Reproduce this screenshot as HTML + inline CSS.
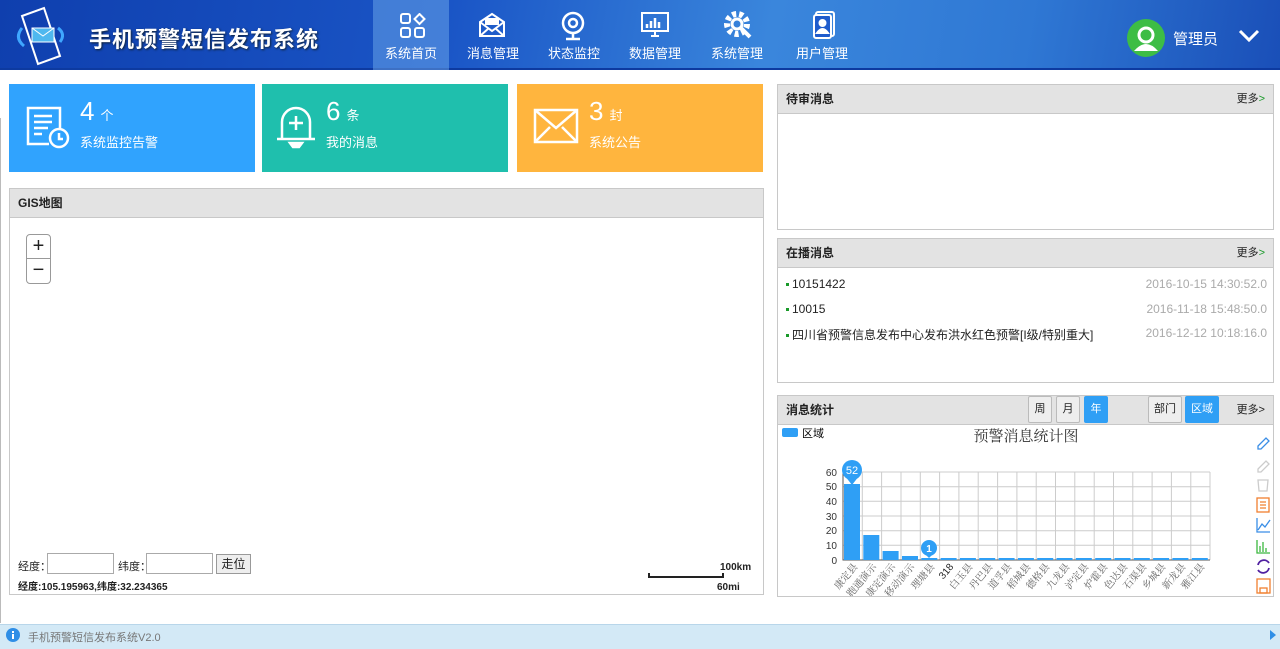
<!DOCTYPE html>
<html><head><meta charset="utf-8">
<style>
*{margin:0;padding:0;box-sizing:border-box}
body{width:1280px;height:649px;overflow:hidden;background:#fff;font-family:"Liberation Sans","Noto Sans CJK SC",sans-serif;position:relative;font-size:12px;color:#222}
.a{position:absolute}
#hdr{left:0;top:0;width:1280px;height:70px;background:linear-gradient(100deg,#0f3fae 0%,#1a55c6 35%,#3a86dc 60%,#2f78d4 80%,#1a4fb8 100%);border-bottom:2px solid #0d3aa0}
.nav{top:0;height:70px;width:80px;color:#fff;font-size:13px;text-align:center}
.nav .t{position:absolute;bottom:8px;width:100%;left:0}
.card{top:84px;height:88px;color:#fff}
.card .n{position:absolute;left:71px;top:12px;font-size:26px}
.card .n small{font-size:13px;margin-left:6px}
.card .l{position:absolute;left:71px;top:48px;font-size:13px}
.pan{border:1px solid #c8c8c8;background:#fff}
.ph{height:29px;background:#e3e3e3;border-bottom:1px solid #c8c8c8;font-weight:bold;font-size:12px;line-height:28px;padding:0 0 0 8px;position:relative}
.more{position:absolute;right:8px;top:0;font-weight:normal;font-size:11px}
.more b{color:#1a9a2a;font-weight:normal}
.row{position:absolute;left:8px;font-size:12px}
.row i{display:inline-block;width:3px;height:3px;background:#1a9a2a;margin-right:3px;vertical-align:middle}
.dt{position:absolute;right:6px;color:#aaa;font-size:12px}
.btn{top:396px;height:27px;border:1px solid #bbb;background:#eee;font-size:11px;text-align:center;line-height:25px;border-radius:2px}
.on{background:#2f9ff5;color:#fff;border-color:#2f9ff5}
</style></head><body>
<div id="hdr" class="a">
 <svg class="a" style="left:14px;top:6px" width="62" height="60" viewBox="0 0 62 60"><path d="M8 10 L30 2 L46 50 L24 58 Z" fill="none" stroke="#fff" stroke-width="2"/><rect x="18" y="22" width="22" height="14" fill="#4fb8ef" stroke="#fff"/><path d="M18 22l11 8 11-8" stroke="#fff" fill="none"/><path d="M8 22 Q0 32 10 40" stroke="#3fa7ff" stroke-width="3" fill="none"/><path d="M44 22 Q52 28 46 36" stroke="#3fa7ff" stroke-width="3" fill="none"/></svg>
 <div class="a" style="left:89px;top:22px;color:#fff;font-size:22px;font-weight:bold;letter-spacing:1px;text-shadow:1px 1px 2px #123">手机预警短信发布系统</div>
 <div class="a nav" style="left:373px;width:76px;background:rgba(120,180,240,.45)"><svg class="a" style="left:27px;top:13px" width="26" height="26" viewBox="0 0 26 26" fill="none" stroke="#fff" stroke-width="2"><rect x="1" y="1" width="9" height="9" rx="2"/><rect x="1" y="15" width="9" height="9" rx="2"/><rect x="15" y="15" width="9" height="9" rx="2"/><path d="M19.5 1l5 5-5 5-5-5z"/></svg><div class="t">系统首页</div></div>
 <div class="a nav" style="left:453px"><svg class="a" style="left:25px;top:12px" width="28" height="26" viewBox="0 0 28 26" fill="none" stroke="#fff" stroke-width="2"><path d="M2 10L14 2l12 8v14H2z"/><path d="M2 10l12 9 12-9M2 24l9-8M26 24l-9-8"/><rect x="8" y="7" width="12" height="5" fill="#fff"/></svg><div class="t">消息管理</div></div>
 <div class="a nav" style="left:534px"><svg class="a" style="left:27px;top:11px" width="24" height="30" viewBox="0 0 24 30" fill="none" stroke="#fff" stroke-width="2.5"><circle cx="12" cy="12" r="10"/><circle cx="12" cy="12" r="4"/><path d="M5 28h14M12 22v6"/></svg><div class="t">状态监控</div></div>
 <div class="a nav" style="left:615px"><svg class="a" style="left:26px;top:12px" width="28" height="26" viewBox="0 0 28 26"><rect x="1" y="1" width="26" height="18" fill="none" stroke="#fff" stroke-width="2"/><path d="M6 16v-4M10 16v-7M14 16v-10M18 16v-6" stroke="#fff" stroke-width="2.5"/><path d="M10 24h8M14 19v5" stroke="#fff" stroke-width="2"/></svg><div class="t">数据管理</div></div>
 <div class="a nav" style="left:697px"><svg class="a" style="left:27px;top:11px" width="28" height="28" viewBox="0 0 28 28"><circle cx="13" cy="13" r="10" fill="none" stroke="#fff" stroke-width="6" stroke-dasharray="4 3"/><circle cx="13" cy="13" r="5" fill="none" stroke="#fff" stroke-width="3"/><path d="M16 16l10 10" stroke="#fff" stroke-width="4"/></svg><div class="t">系统管理</div></div>
 <div class="a nav" style="left:782px"><svg class="a" style="left:31px;top:11px" width="22" height="28" viewBox="0 0 22 28" fill="none" stroke="#fff" stroke-width="2"><rect x="3" y="1" width="18" height="24" rx="2"/><rect x="1" y="4" width="17" height="23" rx="2" fill="#1f5ccc"/><circle cx="9.5" cy="12" r="3" fill="#fff"/><path d="M4 22q5.5-8 11 0z" fill="#fff"/></svg><div class="t">用户管理</div></div>
 <svg class="a" style="left:1127px;top:19px" width="38" height="38" viewBox="0 0 38 38"><circle cx="19" cy="19" r="19" fill="#3dbd45"/><circle cx="19" cy="16" r="7" fill="none" stroke="#fff" stroke-width="3"/><path d="M7 32q12-14 24 0" fill="#fff"/></svg>
 <div class="a" style="left:1173px;top:28px;color:#fff;font-size:15px">管理员</div>
 <svg class="a" style="left:1238px;top:29px" width="22" height="14" viewBox="0 0 22 14"><path d="M2 2l9 9 9-9" stroke="#fff" stroke-width="3" fill="none"/></svg>
</div>
<div class="a" style="left:0;top:118px;width:1px;height:505px;background:#bbb"></div>

<div class="a card" style="left:9px;width:246px;background:#30a3fe">
 <svg class="a" style="left:16px;top:18px" width="48" height="48" viewBox="0 0 48 48" fill="none" stroke="#fff" stroke-width="2.5"><path d="M24 42H3V6h32v20"/><path d="M9 14h18M9 20h18M9 26h14M9 32h8"/><circle cx="34" cy="36" r="9" fill="#30a3fe"/><path d="M34 31v6h4"/></svg>
 <div class="n">4<small>个</small></div><div class="l">系统监控告警</div></div>
<div class="a card" style="left:262px;width:246px;background:#1fbfad">
 <svg class="a" style="left:14px;top:18px" width="40" height="48" viewBox="0 0 40 48" fill="none" stroke="#fff" stroke-width="2.5"><path d="M6 36V20a14 14 0 0 1 28 0v16"/><path d="M1 37h38"/><path d="M14 41h12l-3 4h-6z" fill="#fff"/><path d="M20 14v14M13 21h14"/></svg>
 <div class="n" style="left:64px">6<small>条</small></div><div class="l" style="left:64px">我的消息</div></div>
<div class="a card" style="left:517px;width:246px;background:#ffb53e">
 <svg class="a" style="left:16px;top:24px" width="46" height="36" viewBox="0 0 46 36" fill="none" stroke="#fff" stroke-width="2.5"><rect x="2" y="2" width="42" height="32"/><path d="M2 2l21 18 21-18M2 34l15-15M44 34l-15-15"/></svg>
 <div class="n" style="left:72px">3<small>封</small></div><div class="l" style="left:72px">系统公告</div></div>

<div class="a pan" style="left:9px;top:188px;width:755px;height:407px">
 <div class="ph">GIS地图</div>
 <div class="a" style="left:16px;top:45px;width:25px;height:50px;border:1px solid #999;border-radius:4px;background:#fff;font-size:20px;text-align:center;line-height:23px">+<div style="border-top:1px solid #999">−</div></div>
 <div class="a" style="left:8px;top:369px;font-size:11px">经度：</div>
 <div class="a" style="left:37px;top:364px;width:67px;height:21px;border:1px solid #aaa"></div>
 <div class="a" style="left:108px;top:369px;font-size:11px">纬度：</div>
 <div class="a" style="left:136px;top:364px;width:67px;height:21px;border:1px solid #aaa"></div>
 <div class="a" style="left:206px;top:365px;width:35px;height:20px;border:1px solid #999;background:#eee;font-size:12px;text-align:center;line-height:18px">走位</div>
 <div class="a" style="left:8px;top:389px;font-size:10px;font-weight:bold">经度:105.195963,纬度:32.234365</div>
 <div class="a" style="left:710px;top:373px;font-size:10px;font-weight:bold">100km</div>
 <div class="a" style="left:638px;top:384px;width:76px;height:5px;border:2px solid #222;border-top:none"></div>
 <div class="a" style="left:707px;top:393px;font-size:10px;font-weight:bold">60mi</div>
</div>

<div class="a pan" style="left:777px;top:84px;width:497px;height:146px"><div class="ph">待审消息<span class="more">更多<b>&gt;</b></span></div></div>

<div class="a pan" style="left:777px;top:238px;width:497px;height:145px"><div class="ph">在播消息<span class="more">更多<b>&gt;</b></span></div>
 <div class="row" style="top:38px"><i></i>10151422</div><div class="dt" style="top:38px">2016-10-15 14:30:52.0</div>
 <div class="row" style="top:63px"><i></i>10015</div><div class="dt" style="top:63px">2016-11-18 15:48:50.0</div>
 <div class="row" style="top:87px"><i></i>四川省预警信息发布中心发布洪水红色预警[I级/特别重大]</div><div class="dt" style="top:87px">2016-12-12 10:18:16.0</div>
</div>

<div class="a pan" style="left:777px;top:395px;width:497px;height:202px"><div class="ph">消息统计<span class="more">更多&gt;</span></div></div>
<div class="a btn" style="left:1028px;width:24px">周</div>
<div class="a btn" style="left:1056px;width:24px">月</div>
<div class="a btn on" style="left:1084px;width:24px">年</div>
<div class="a btn" style="left:1148px;width:34px">部门</div>
<div class="a btn on" style="left:1185px;width:34px">区域</div>

<svg class="a" style="left:778px;top:424px" width="495" height="172" viewBox="778 424 495 172" font-family="Liberation Sans,sans-serif">
 <rect x="782" y="428" width="16" height="9" rx="2" fill="#2f9ff5"/>
 <text x="802" y="437" font-size="11" font-family="Noto Sans CJK SC">区域</text>
 <text x="1026" y="441" font-size="15" text-anchor="middle" font-family="Noto Serif CJK SC,serif" fill="#333">预警消息统计图</text>
 <g stroke="#ccc" stroke-width="1">
  <path d="M843 472H1210M843 486.7H1210M843 501.3H1210M843 516H1210M843 530.7H1210M843 545.3H1210"/>
  <path d="M862.3 472V560M881.6 472V560M901 472V560M920.3 472V560M939.6 472V560M958.9 472V560M978.2 472V560M997.6 472V560M1016.9 472V560M1036.2 472V560M1055.5 472V560M1074.8 472V560M1094.2 472V560M1113.5 472V560M1132.8 472V560M1152.1 472V560M1171.4 472V560M1190.8 472V560M1210 472V560"/>
 </g>
 <path d="M843 472V560H1210" stroke="#555" fill="none"/>
 <g fill="#2f9ff5">
  <rect x="844" y="484" width="16" height="76"/>
  <rect x="863.3" y="535" width="16" height="25"/>
  <rect x="882.6" y="551" width="16" height="9"/>
  <rect x="902" y="556" width="16" height="4"/>
  <rect x="921.3" y="558" width="16" height="2"/>
  <rect x="940.6" y="558" width="16" height="2"/><rect x="959.9" y="558" width="16" height="2"/><rect x="979.2" y="558" width="16" height="2"/><rect x="998.6" y="558" width="16" height="2"/><rect x="1017.9" y="558" width="16" height="2"/><rect x="1037.2" y="558" width="16" height="2"/><rect x="1056.5" y="558" width="16" height="2"/><rect x="1075.8" y="558" width="16" height="2"/><rect x="1095.2" y="558" width="16" height="2"/><rect x="1114.5" y="558" width="16" height="2"/><rect x="1133.8" y="558" width="16" height="2"/><rect x="1153.1" y="558" width="16" height="2"/><rect x="1172.4" y="558" width="16" height="2"/><rect x="1191.8" y="558" width="16" height="2"/>
  <circle cx="852" cy="470" r="10"/><path d="M845 476l7 9 7-9z"/>
  <circle cx="929" cy="548" r="8"/><path d="M923 552l6 6 6-6z"/>
 </g>
 <text x="852" y="474" font-size="11" fill="#fff" text-anchor="middle">52</text>
 <text x="929" y="552" font-size="10" fill="#fff" text-anchor="middle" font-weight="bold">1</text>
 <g font-size="10" fill="#333" text-anchor="end">
  <text x="837" y="476">60</text><text x="837" y="490">50</text><text x="837" y="505">40</text><text x="837" y="520">30</text><text x="837" y="534">20</text><text x="837" y="549">10</text><text x="837" y="564">0</text>
 </g>
 <g font-size="10" fill="#666" font-family="Noto Serif CJK SC,serif" text-anchor="end">
  <text transform="translate(858,567) rotate(-50)">康定县</text>
  <text transform="translate(877,567) rotate(-50)">跑通演示</text>
  <text transform="translate(896,567) rotate(-50)">康定演示</text>
  <text transform="translate(915,567) rotate(-50)">移动演示</text>
  <text transform="translate(935,567) rotate(-50)">理塘县</text>
  <text transform="translate(954,567) rotate(-50)" fill="#222" font-family="Liberation Sans">318</text>
  <text transform="translate(973,567) rotate(-50)">白玉县</text>
  <text transform="translate(993,567) rotate(-50)">丹巴县</text>
  <text transform="translate(1012,567) rotate(-50)">道孚县</text>
  <text transform="translate(1031,567) rotate(-50)">稻城县</text>
  <text transform="translate(1050,567) rotate(-50)">德格县</text>
  <text transform="translate(1070,567) rotate(-50)">九龙县</text>
  <text transform="translate(1089,567) rotate(-50)">泸定县</text>
  <text transform="translate(1108,567) rotate(-50)">炉霍县</text>
  <text transform="translate(1128,567) rotate(-50)">色达县</text>
  <text transform="translate(1147,567) rotate(-50)">石渠县</text>
  <text transform="translate(1166,567) rotate(-50)">乡城县</text>
  <text transform="translate(1186,567) rotate(-50)">新龙县</text>
  <text transform="translate(1205,567) rotate(-50)">雅江县</text>
 </g>
 <g fill="none" stroke-width="1.3">
  <path d="M1258 446l8-8 3 3-8 8h-3z" stroke="#3a8ee6"/>
  <path d="M1258 469l8-8 3 3-8 8h-3z" stroke="#ccc"/>
  <path d="M1258 480h10l-1 11h-8z" stroke="#ccc"/>
  <rect x="1257" y="498" width="12" height="14" stroke="#f08030"/><path d="M1260 502h6M1260 505h6M1260 508h6" stroke="#f08030"/>
  <path d="M1257 518v14h13M1258 530l4-6 3 3 5-7" stroke="#3a8ee6"/>
  <path d="M1257 540v13h13M1260 552v-6M1263 552v-10M1266 552v-4" stroke="#3cb840"/>
  <path d="M1258 565a6 6 0 0 1 11-2M1269 568a6 6 0 0 1-11 2" stroke="#5020a0" stroke-width="1.8"/>
  <rect x="1257" y="579" width="13" height="14" stroke="#f08030"/><rect x="1260" y="588" width="7" height="5" stroke="#f08030"/>
 </g>
</svg>

<div class="a" style="left:0;top:624px;width:1280px;height:25px;background:#d3e9f6;border-top:1px solid #b8d6ea"></div>
<svg class="a" style="left:6px;top:628px" width="14" height="14" viewBox="0 0 14 14"><circle cx="7" cy="7" r="7" fill="#2f8ee6"/><rect x="6" y="6" width="2" height="5" fill="#fff"/><rect x="6" y="3" width="2" height="2" fill="#fff"/></svg>
<div class="a" style="left:28px;top:629px;font-size:11px;color:#777">手机预警短信发布系统V2.0</div>
<svg class="a" style="left:1269px;top:629px" width="8" height="12" viewBox="0 0 8 12"><path d="M1 1l6 5-6 5z" fill="#2f8ee6"/></svg>
</body></html>
